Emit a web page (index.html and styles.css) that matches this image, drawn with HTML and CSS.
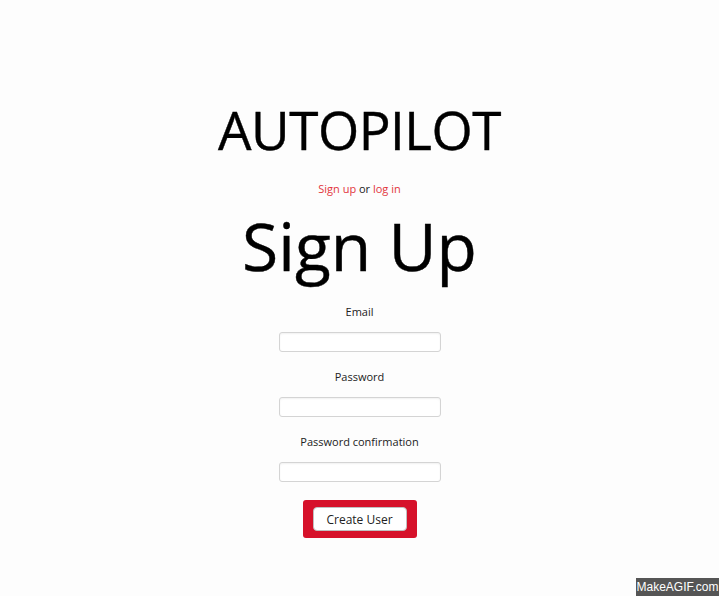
FILE: index.html
```html
<!DOCTYPE html>
<html>
<head>
<meta charset="utf-8">
<link rel="stylesheet" href="styles.css">
</head>
<body>
<main class="page">
  <h1 class="brand">AUTOPILOT</h1>
  <p class="auth-links"><a href="#">Sign up</a> or <a href="#">log in</a></p>
  <h2 class="title">Sign Up</h2>
  <form class="form">
    <label class="field">
      <span class="label">Email</span>
      <input class="input" type="email">
    </label>
    <label class="field">
      <span class="label">Password</span>
      <input class="input" type="password">
    </label>
    <label class="field">
      <span class="label">Password confirmation</span>
      <input class="input" type="password">
    </label>
    <div class="actions">
      <button class="btn" type="button">Create User</button>
    </div>
  </form>
</main>
<div class="watermark">MakeAGIF.com</div>
</body>
</html>
```
FILE: styles.css
```css
html, body {
  margin: 0;
  padding: 0;
  background: #fdfdfd;
  height: 596px;
  overflow: hidden;
}
body {
  font-family: "Open Sans", "DejaVu Sans", sans-serif;
  color: #000;
  position: relative;
}
.page {
  display: flex;
  flex-direction: column;
  align-items: center;
  padding-top: 98px;
}
.brand {
  margin: 0;
  font-weight: 400;
  font-size: 53px;
  line-height: 64px;
  letter-spacing: -0.5px;
  -webkit-text-stroke: 0.4px #000;
}
.auth-links {
  margin: 19px 0 0;
  font-size: 11px;
  line-height: 16px;
  color: #222;
}
.auth-links a {
  color: #e2353c;
  text-decoration: none;
}
.title {
  margin: 8px 0 0;
  font-weight: 400;
  font-size: 66px;
  line-height: 80px;
  -webkit-text-stroke: 0.4px #000;
}
.form {
  display: flex;
  flex-direction: column;
  align-items: center;
  margin-top: 19px;
}
.field {
  display: flex;
  flex-direction: column;
  align-items: center;
}
.label {
  font-size: 11px;
  line-height: 16px;
  color: #222;
}
.input {
  box-sizing: border-box;
  width: 162px;
  height: 20px;
  margin: 12px 0 17px;
  border: 1px solid #d4d4d4;
  border-radius: 3px;
  background: #fff;
  box-shadow: inset 0 1px 2px rgba(0,0,0,0.06);
}
.actions {
  margin-top: 1px;
  background: #d6112a;
  border-radius: 3px;
  padding: 7px 10px;
}
.btn {
  display: block;
  width: 94px;
  height: 24px;
  border: 1px solid #c0c0c0;
  border-radius: 4px;
  background: #fff;
  font-family: "Open Sans", "DejaVu Sans", sans-serif;
  font-size: 12px;
  color: #222;
  padding: 0;
}
.watermark {
  position: absolute;
  right: 0;
  top: 578px;
  width: 83px;
  height: 18px;
  background: #555;
  color: #fff;
  font-family: "Liberation Sans", sans-serif;
  font-size: 12px;
  line-height: 18px;
  text-align: center;
}
```
